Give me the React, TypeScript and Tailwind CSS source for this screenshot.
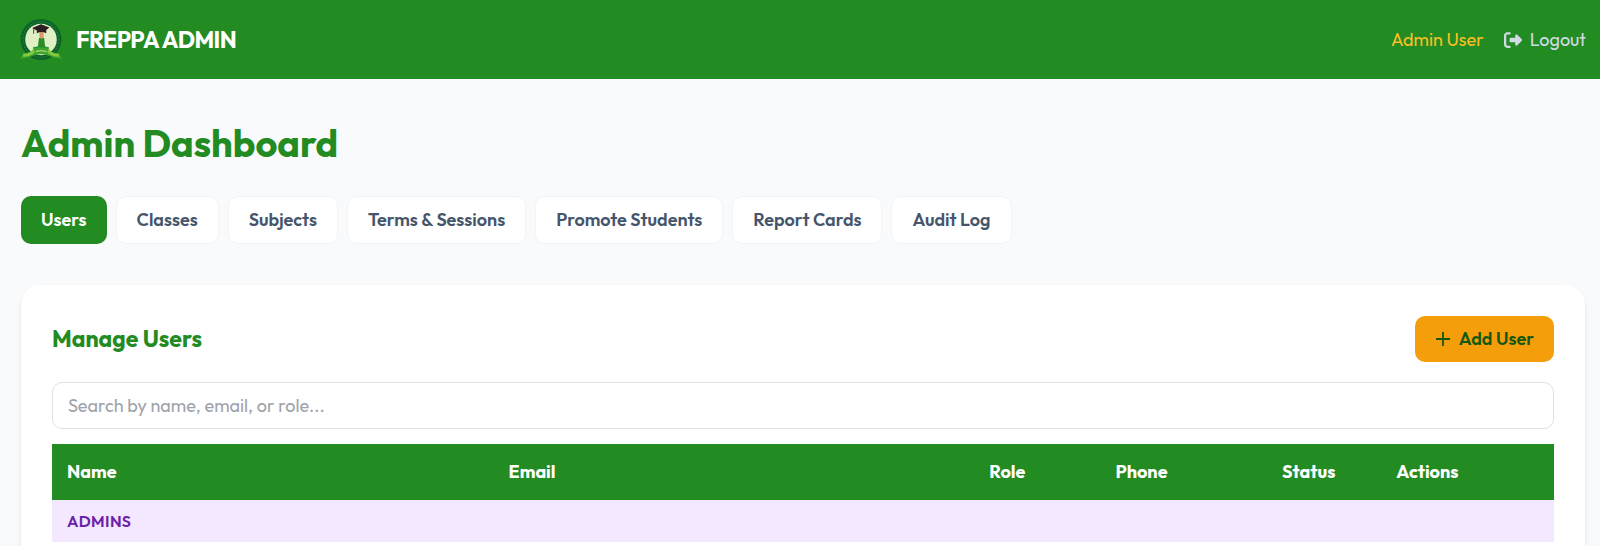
import React, { useState } from 'react'
import { FaRightFromBracket } from 'react-icons/fa6'

const tabs = [
  { id: 'users', label: 'Users' },
  { id: 'classes', label: 'Classes' },
  { id: 'subjects', label: 'Subjects' },
  { id: 'terms', label: 'Terms & Sessions' },
  { id: 'promote', label: 'Promote Students' },
  { id: 'reports', label: 'Report Cards' },
  { id: 'audit', label: 'Audit Log' },
]

const columns = [
  { label: 'Name', width: 'w-[29.4%]' },
  { label: 'Email', width: 'w-[32%]' },
  { label: 'Role', width: 'w-[8.4%]' },
  { label: 'Phone', width: 'w-[11.1%]' },
  { label: 'Status', width: 'w-[7.6%]' },
  { label: 'Actions', width: 'w-[11.5%]' },
]

function Logo() {
  return (
    <svg viewBox="0 0 40 40" className="h-[42px] w-[42px]" role="img" aria-label="Freppa">
      <circle cx="20" cy="19.500" r="19.500" fill="#0c6428" />
      <circle cx="20" cy="19.500" r="17" fill="none" stroke="#3c8f48" strokeWidth="1" strokeDasharray="1 2" />
      <circle cx="20" cy="19.500" r="15" fill="#dff0c4" />
      {/* Graduate */}
      <path d="M18 18h5l1 9h-7z" fill="#2f8a2c" />
      <path d="M18.500 12h4v5.500l-2 1.500-2-1.500z" fill="#d59a6a" />
      <path d="M11.500 8.500 20 5l8 3-3 2.500v3c-3-1.500-6-1.500-9 0V11z" fill="#2b1d22" />
      <path d="M13 9v5" stroke="#a3352c" strokeWidth="1" />
      {/* Crest and ribbon */}
      <path d="M12.500 27c5-1.500 10-1.500 15 0v6h-15z" fill="#249030" />
      <path d="M0 38l3-5c5 0 8-2 10-5 5-1 9-1 14 0 2 3 5 5 10 5l3 5c-5-1-9-1-12-3-5-2-11-2-16 0-3 2-7 2-12 3z" fill="#3fa52c" />
      <path d="M3 33c5 0 8-2 10-5l1 4c-3 3-7 4-11 4zM37 33c-5 0-8-2-10-5l-1 4c3 3 7 4 11 4z" fill="#84c93a" />
      <path d="M15 31c3-1 7-1 10 0" stroke="#bfe08a" strokeWidth="1" fill="none" />
    </svg>
  )
}

export default function App() {
  const [activeTab, setActiveTab] = useState('users')
  const [search, setSearch] = useState('')

  return (
    <div className="min-h-screen bg-[#f8fafc] font-['Outfit','Lato',sans-serif] text-lg">
      {/* Header */}
      <header className="flex h-[79px] items-center justify-between bg-[#228b22] pr-[14px] pl-5">
        <div className="flex items-center gap-[14px]">
          <Logo />
          <span className="text-[23px] font-bold tracking-tight text-white">FREPPA ADMIN</span>
        </div>
        <div className="flex items-center gap-5">
          <span className="text-[#fbbf24]">Admin User</span>
          <button className="flex items-center gap-2 text-[#d1dbe6] hover:text-white">
            <FaRightFromBracket className="h-[18px] w-[18px]" />
            Logout
          </button>
        </div>
      </header>

      <main className="pt-10 pr-[15px] pl-[21px]">
        <h1 className="text-[38px] leading-[48px] font-bold text-[#228b22]">Admin Dashboard</h1>

        {/* Tabs */}
        <nav className="mt-[29px] flex flex-wrap gap-[9px]">
          {tabs.map((tab) => (
            <button
              key={tab.id}
              onClick={() => setActiveTab(tab.id)}
              className={`h-12 rounded-[10px] px-5 font-semibold ${
                activeTab === tab.id
                  ? 'bg-[#228b22] text-white'
                  : 'border border-slate-100 bg-white text-slate-600 hover:bg-gray-50'
              }`}
            >
              {tab.label}
            </button>
          ))}
        </nav>

        {/* Users panel */}
        <section className="mt-[41px] rounded-[20px] bg-white p-[31px] shadow-md">
          <div className="flex items-center justify-between">
            <h2 className="text-[23px] font-bold text-[#228b22]">Manage Users</h2>
            <button className="flex h-[46px] items-center gap-2 rounded-[10px] bg-[#f59e0b] px-5 font-semibold text-[#14580f]">
              <svg viewBox="0 0 16 16" className="h-4 w-4" fill="none" stroke="currentColor" strokeWidth="1.800">
                <path d="M8 1v14M1 8h14" />
              </svg>
              Add User
            </button>
          </div>

          <input
            type="text"
            aria-label="Search users"
            value={search}
            onChange={(e) => setSearch(e.target.value)}
            placeholder="Search by name, email, or role..."
            className="mt-5 h-[47px] w-full rounded-[10px] border border-[#dfe1e5] px-[15px] placeholder:text-[#a0a3ab]"
          />

          <table className="mt-[15px] w-full table-fixed text-left">
            <thead>
              <tr className="h-14 bg-[#228b22] text-white">
                {columns.map((col) => (
                  <th key={col.label} className={`px-[15px] font-bold ${col.width}`}>
                    {col.label}
                  </th>
                ))}
              </tr>
            </thead>
            <tbody>
              <tr className="h-[42px] bg-[#f3e8ff]">
                <td colSpan={6} className="px-[15px] text-base font-semibold tracking-wide text-[#6b21a8]">
                  ADMINS
                </td>
              </tr>
            </tbody>
          </table>
        </section>
      </main>
    </div>
  )
}
